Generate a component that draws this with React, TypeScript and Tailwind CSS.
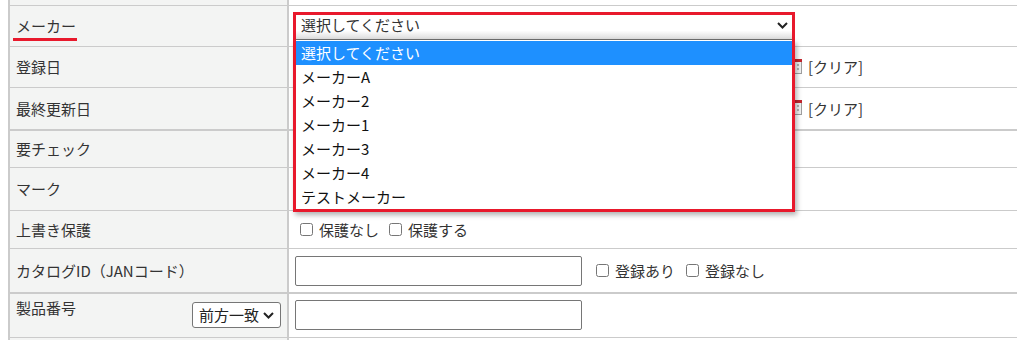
import type { ReactNode } from 'react'

const options = ['選択してください', 'メーカーA', 'メーカー2', 'メーカー1', 'メーカー3', 'メーカー4', 'テストメーカー']

function Chevron({ className }: { className?: string }) {
  return (
    <svg className={className} width="11" height="7" viewBox="0 0 11 7" fill="none">
      <path d="M1 1l4.5 4.5L10 1" stroke="#222" strokeWidth="2" />
    </svg>
  )
}

function CalendarIcon() {
  return (
    <svg width="16" height="16" viewBox="0 0 16 16">
      <rect x="0.5" y="1.5" width="15" height="14" fill="#f3f3f3" stroke="#a0a0a0" />
      <rect x="0" y="1" width="16" height="3" fill="#c4262e" />
      <rect x="3" y="6" width="2" height="2" fill="#b5b5b5" />
      <rect x="7" y="6" width="2" height="2" fill="#b5b5b5" />
      <rect x="11" y="6" width="2" height="2" fill="#b5b5b5" />
      <rect x="3" y="10" width="2" height="2" fill="#b5b5b5" />
      <rect x="7" y="10" width="2" height="2" fill="#b5b5b5" />
      <rect x="11" y="10" width="2" height="2" fill="#b5b5b5" />
    </svg>
  )
}

function Row({
  height,
  thick,
  label,
  labelClass = 'items-center',
  valueClass = 'items-center',
  children,
}: {
  height: string
  thick?: boolean
  label?: ReactNode
  labelClass?: string
  valueClass?: string
  children?: ReactNode
}) {
  return (
    <div className={`flex ${height} ${thick ? 'border-b-2' : 'border-b'} border-[#cbcbcb]`}>
      <div className={`flex w-[279px] shrink-0 border-r-2 border-[#cbcbcb] bg-[#f3f4f3] pl-[6px] ${labelClass}`}>
        {label}
      </div>
      <div className={`flex flex-1 bg-white ${valueClass}`}>{children}</div>
    </div>
  )
}

function Check({ label }: { label: string }) {
  return (
    <label className="flex items-center gap-[6px]">
      <input type="checkbox" className="m-0 size-[13px]" />
      <span>{label}</span>
    </label>
  )
}

function DateRow() {
  return (
    <div className="flex items-center pl-[6px]">
      <input className="h-[26px] w-[480px] rounded-[2px] border border-[#767676]" />
      <span className="ml-[11px] mt-[-3px]">
        <CalendarIcon />
      </span>
      <span className="ml-[6px] leading-[20px]">[クリア]</span>
    </div>
  )
}

export default function App() {
  return (
    <div className="h-[340px] overflow-hidden bg-white font-['Noto_Sans_CJK_JP',sans-serif] text-[15px] leading-[20px] text-[#333]">
      <div className="ml-[8px] border-l-2 border-[#cbcbcb]">
        <Row height="h-[6px]" />

        <Row
          height="h-[41px]"
          valueClass="items-start pl-[4px] pt-[6px]"
          label={
            <span className="relative pl-[0px]">
              メーカー
              <span className="absolute left-[-3px] right-[-1px] top-[22px] h-[3px] bg-[#e8192c]" />
            </span>
          }
        >
          <div className="relative z-10 w-[502px] border-[3px] border-b-0 border-[#e8192c]">
            <div className="flex h-[24px] items-center justify-between bg-[linear-gradient(to_bottom,#ffffff_65%,#dcdcdc)] pb-[4px] pl-[5px] pr-[4px]">
              <span>選択してください</span>
              <Chevron />
            </div>
            <div className="h-[1px] bg-[#6e6e6e]" />
            <ul className="absolute left-[-3px] top-full w-[502px] border-[3px] border-t-0 border-[#e8192c] bg-white pt-[1px] shadow-[2px_3px_5px_rgba(0,0,0,0.3)]">
              {options.map((o, i) => (
                <li
                  key={o}
                  className={`flex h-[24px] items-center pl-[5px] ${i === 0 ? 'bg-[#1e90ff] text-white' : 'text-[#111]'}`}
                >
                  {o}
                </li>
              ))}
            </ul>
          </div>
        </Row>

        <Row height="h-[41px]" label="登録日">
          <DateRow />
        </Row>
        <Row height="h-[43px]" thick label="最終更新日">
          <DateRow />
        </Row>
        <Row height="h-[37px]" label="要チェック" />
        <Row height="h-[43px]" label="マーク" />
        <Row height="h-[38px]" label="上書き保護" valueClass="items-center pl-[11px]">
          <div className="flex items-center gap-[10px]">
            <Check label="保護なし" />
            <Check label="保護する" />
          </div>
        </Row>
        <Row height="h-[45px]" thick label="カタログID（JANコード）" valueClass="items-center pl-[6px]">
          <input className="h-[30px] w-[287px] rounded-[2px] border border-[#767676]" />
          <div className="ml-[14px] flex items-center gap-[11px]">
            <Check label="登録あり" />
            <Check label="登録なし" />
          </div>
        </Row>
        <Row
          height="h-[44px]"
          label={
            <div className="flex w-full items-start justify-between pr-[6px]">
              <span className="pt-[4px]">製品番号</span>
              <div className="mt-[8px] flex h-[26px] w-[89px] items-center justify-between rounded-[3px] border border-[#767676] bg-white pl-[6px] pr-[6px] text-[#222]">
                <span>前方一致</span>
                <Chevron />
              </div>
            </div>
          }
          labelClass="items-start"
          valueClass="items-start pl-[6px] pt-[6px]"
        >
          <input className="h-[30px] w-[287px] rounded-[2px] border border-[#767676]" />
        </Row>
        <Row height="h-[10px]" />
      </div>
    </div>
  )
}
